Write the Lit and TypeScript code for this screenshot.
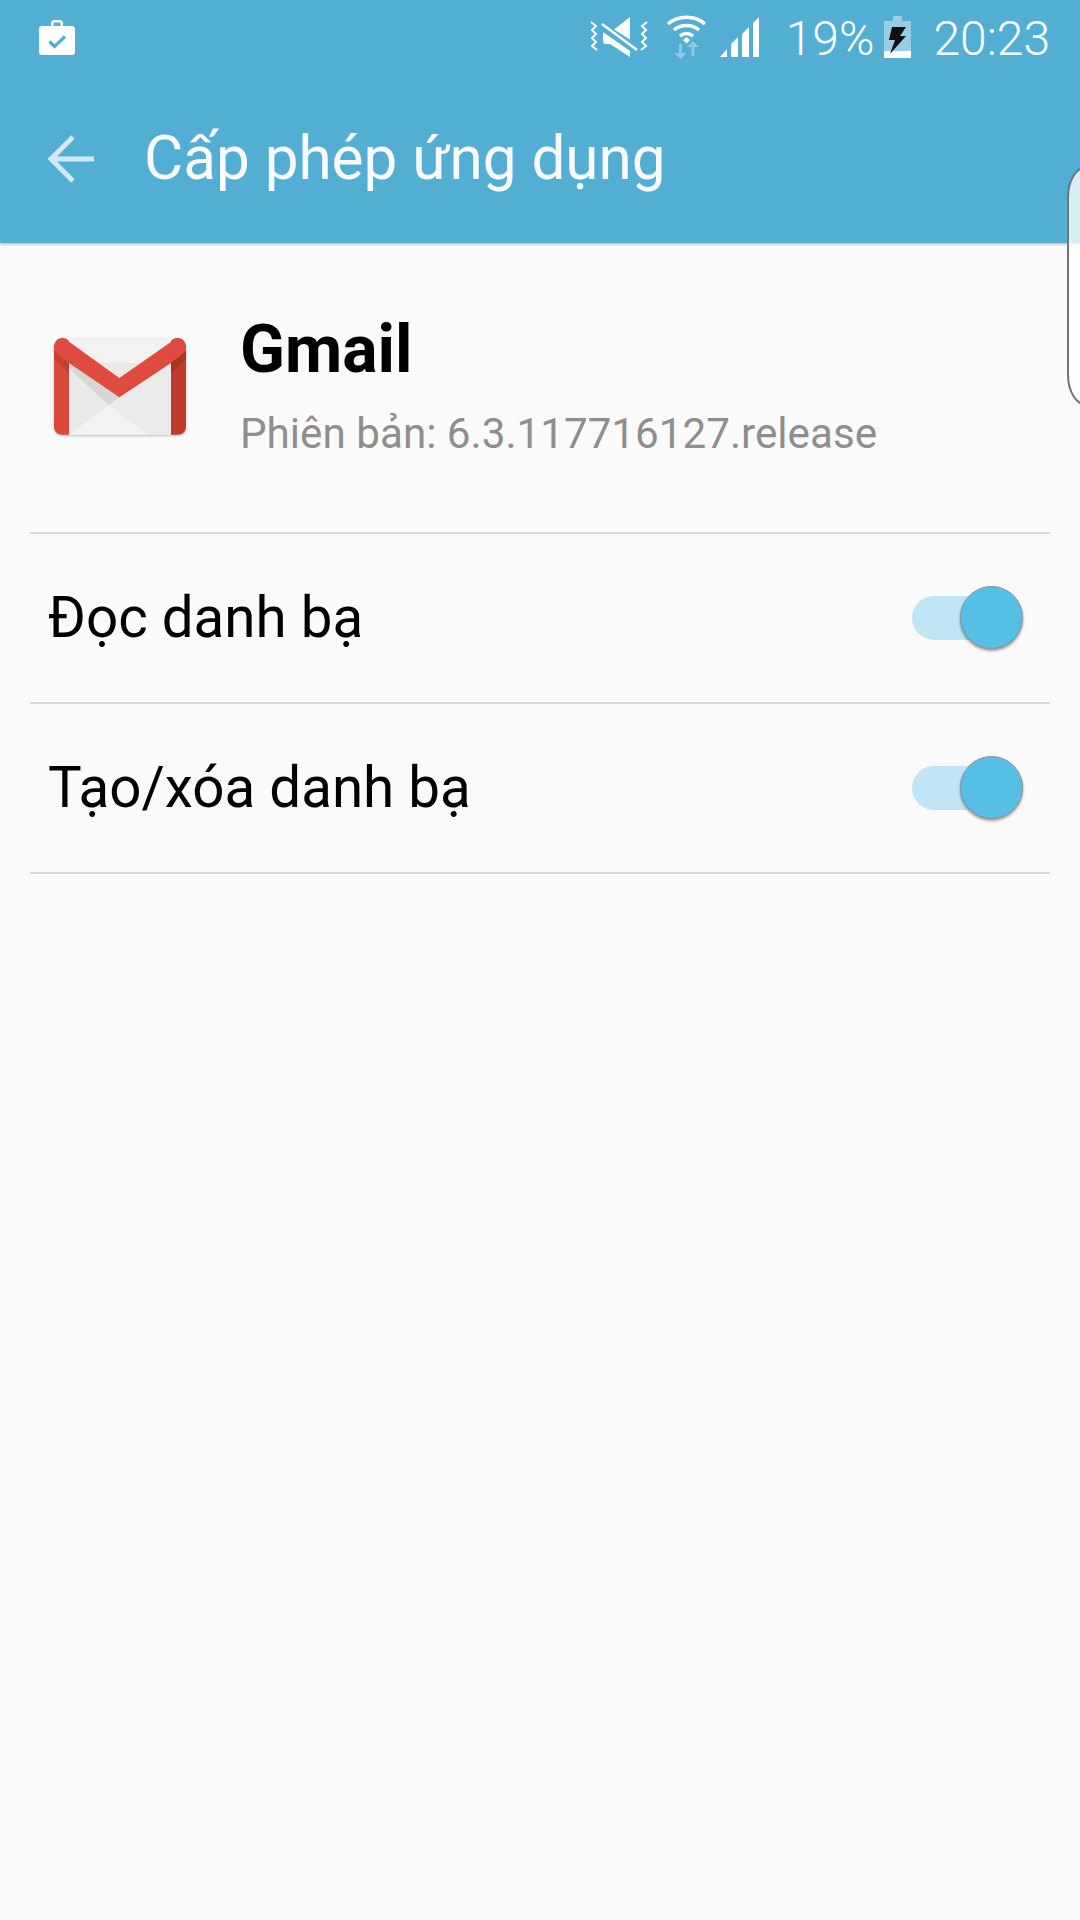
import { LitElement, html, css, svg } from 'lit';
import { customElement, property } from 'lit/decorators.js';

@customElement('perm-toggle')
export class PermToggle extends LitElement {
  static styles = css`
    :host {
      display: block;
      width: 112px;
      height: 66px;
      position: relative;
    }
    .track {
      position: absolute;
      left: 0;
      top: 11px;
      width: 90px;
      height: 44px;
      border-radius: 22px;
      background: #c0e6f5;
    }
    .knob {
      position: absolute;
      left: 48px;
      top: 1px;
      width: 63px;
      height: 63px;
      box-sizing: border-box;
      border-radius: 50%;
      background: #56bfe6;
      border: 1px solid #8a9499;
      box-shadow: 0 2px 3px rgba(0, 0, 0, 0.4);
    }
  `;

  render() {
    return html`<div class="track"></div><div class="knob"></div>`;
  }
}

@customElement('perm-row')
export class PermRow extends LitElement {
  @property() label = '';

  static styles = css`
    :host {
      display: block;
      margin: 0 30px;
      border-bottom: 2px solid #d9d9d9;
    }
    .row {
      display: flex;
      align-items: center;
      justify-content: space-between;
      height: 168px;
      padding: 0 26px 0 18px;
    }
    .label {
      font: 400 56.5px Roboto, sans-serif;
      color: #000;
    }
  `;

  render() {
    return html`
      <div class="row">
        <span class="label">${this.label}</span>
        <perm-toggle></perm-toggle>
      </div>
    `;
  }
}

const briefcase = svg`
  <path fill="#fff" fill-rule="evenodd" d="M12 7V4.500C12 2.500 13.300 1 15 1h6c1.700 0 3 1.500 3 3.500V7h9c1.700 0 3 1.300 3 3v23c0 1.700-1.300 3-3 3H3c-1.700 0-3-1.300-3-3V10c0-1.700 1.300-3 3-3h9zm2.500 0h7V4.500c0-.6-.4-1-1-1h-5c-.6 0-1 .4-1 1V7z"/>
  <path fill="none" stroke="#53aed4" stroke-width="3.200" d="M10.500 22.500l5 5L26 17.500"/>
`;

const gmail = svg`
  <rect x="4" y="1" width="388" height="286" rx="14" fill="#f2f2f2"/>
  <path d="M45 75h306v215H45z" fill="#e9e9e9"/>
  <path d="M45 290L165 201l120 89z" fill="#f2f2f2"/>
  <path d="M165 201l31-23 155-103v215H285z" fill="#ebebeb"/>
  <path d="M45 75l151 103-32 24L45 90z" fill="#d6d6d6"/>
  <path d="M0 30C0 12 10 0 25 0c8 0 14 4 20 8v282H24C8 290 0 280 0 264z" fill="#d94a3b"/>
  <path d="M396 30c0-18-10-30-25-30-8 0-14 4-20 8v282h21c16 0 24-10 24-26z" fill="#c03c2a"/>
  <path d="M0 36l45 39v34L0 62z" fill="#c5402f"/>
  <path d="M396 36l-45 39v34l45-47z" fill="#a93424"/>
  <path d="M0 32c0-18 10-30 25-30 6 0 10 2 14 5l157 113L358 7c4-3 8-5 13-5 15 0 25 12 25 30v6L351 75 196 178 45 75 0 38z" fill="#df4b3e"/>
`;

@customElement('app-root')
export class AppRoot extends LitElement {
  static styles = css`
    :host {
      display: block;
      position: relative;
      width: 1080px;
      height: 1920px;
      overflow: hidden;
      background: #fafafa;
      font-family: Roboto, sans-serif;
    }
    .header {
      background: #53aed4;
      height: 243px;
      box-shadow: 0 1px 3px rgba(0, 0, 0, 0.3);
      position: relative;
    }
    .status {
      display: flex;
      align-items: center;
      height: 74px;
      padding: 0 30px 0 39px;
      color: #fff;
    }
    .status .spacer {
      flex: 1;
    }
    .status svg {
      display: block;
    }
    .status .txt {
      font: 300 48px Roboto, sans-serif;
      line-height: 70px;
      padding-top: 4px;
    }
    .mute {
      margin-right: 18px;
    }
    .wifi {
      margin-right: 13px;
    }
    .signal {
      margin-right: 26px;
    }
    .battery {
      margin: 0 22px 0 10px;
    }
    .toolbar {
      display: flex;
      align-items: center;
      height: 169px;
      padding-left: 48px;
    }
    .toolbar .title {
      font: 400 60.2px Roboto, sans-serif;
      color: #fafafa;
      margin-left: 50px;
    }
    .app {
      display: flex;
      height: 291px;
      margin: 0 30px;
      padding-left: 24px;
      box-sizing: border-box;
      border-bottom: 2px solid #d9d9d9;
    }
    .app .logo {
      margin-top: 95px;
      flex: none;
      filter: drop-shadow(0 1px 1px rgba(0, 0, 0, 0.25));
    }
    .app .info {
      margin-left: 54px;
      padding-top: 72px;
    }
    .app .name {
      font: 700 66px Roboto, sans-serif;
      line-height: 70px;
      color: #000;
    }
    .app .version {
      font: 400 42.2px Roboto, sans-serif;
      line-height: 50px;
      margin-top: 24px;
      color: #8e8e8e;
    }
    .edge {
      position: absolute;
      right: -27px;
      top: 166px;
      width: 40px;
      height: 240px;
      box-sizing: border-box;
      border: 2px solid #6f7477;
      border-radius: 22px / 34px;
      background: rgba(255, 255, 255, 0.78);
    }
  `;

  render() {
    return html`
      <div class="header">
        <div class="status">
          <svg width="36" height="36" viewBox="0 0 36 36">${briefcase}</svg>
          <div class="spacer"></div>
          <svg class="mute" width="58" height="44" viewBox="0 0 58 44" fill="#fff">
            <path d="M24 14.500L40 2v22.500zM13 17l27 19v6L20 29h-4c-2 0-3-1-3-3z"/>
            <path d="M12 9l35 26" fill="none" stroke="#fff" stroke-width="2.500"/>
            <path d="M1 7l5 4-4 4 4 4-4 4 4 4-4 4 5 4M57 7l-5 4 4 4-4 4 4 4-4 4 4 4-5 4" fill="none" stroke="#fff" stroke-width="2"/>
          </svg>
          <svg class="wifi" width="41" height="44" viewBox="0 0 41 44" fill="none">
            <path d="M2 9c10-9 27-9 37 0M8 15c7-6 18-6 25 0M14 21c4-3 9-3 13 0" stroke="#fff" stroke-width="3.500"/>
            <path d="M17 25l3.500-3 3.500 3-3.500 3.500z" fill="#fff"/>
            <path d="M13 29v9h-4.500l6 6 6-6H16v-9zM27 26l-6 6h4.500v9h3v-9H33z" fill="#fff" opacity=".35"/>
          </svg>
          <svg class="signal" width="40" height="40" viewBox="0 0 40 40" fill="#fff">
            <path d="M0 40l7-8v8zM11 40V27l7-7v20zM22 40V17l7-7v30zM33 40V6l6-6v40z"/>
          </svg>
          <span class="txt">19%</span>
          <svg class="battery" width="27" height="42" viewBox="0 0 27 42">
            <path d="M9 0h9v5h9v37H0V5h9z" fill="#fff" opacity=".4"/>
            <rect y="35" width="27" height="7" fill="#fff"/>
            <path d="M8 11h14l-6 9h6L6 38l5-14H5z" fill="#111"/>
          </svg>
          <span class="txt">20:23</span>
        </div>
        <div class="toolbar">
          <svg width="46" height="48" viewBox="0 0 46 48" fill="none" stroke="#d3e8f3" stroke-width="5">
            <path d="M46 24H4M25 2L3 24l22 22"/>
          </svg>
          <span class="title">Cấp phép ứng dụng</span>
        </div>
      </div>
      <div class="app">
        <svg class="logo" width="132" height="97" viewBox="0 0 396 291">${gmail}</svg>
        <div class="info">
          <div class="name">Gmail</div>
          <div class="version">Phiên bản: 6.3.117716127.release</div>
        </div>
      </div>
      <perm-row label="Đọc danh bạ"></perm-row>
      <perm-row label="Tạo/xóa danh bạ"></perm-row>
      <div class="edge"></div>
    `;
  }
}
